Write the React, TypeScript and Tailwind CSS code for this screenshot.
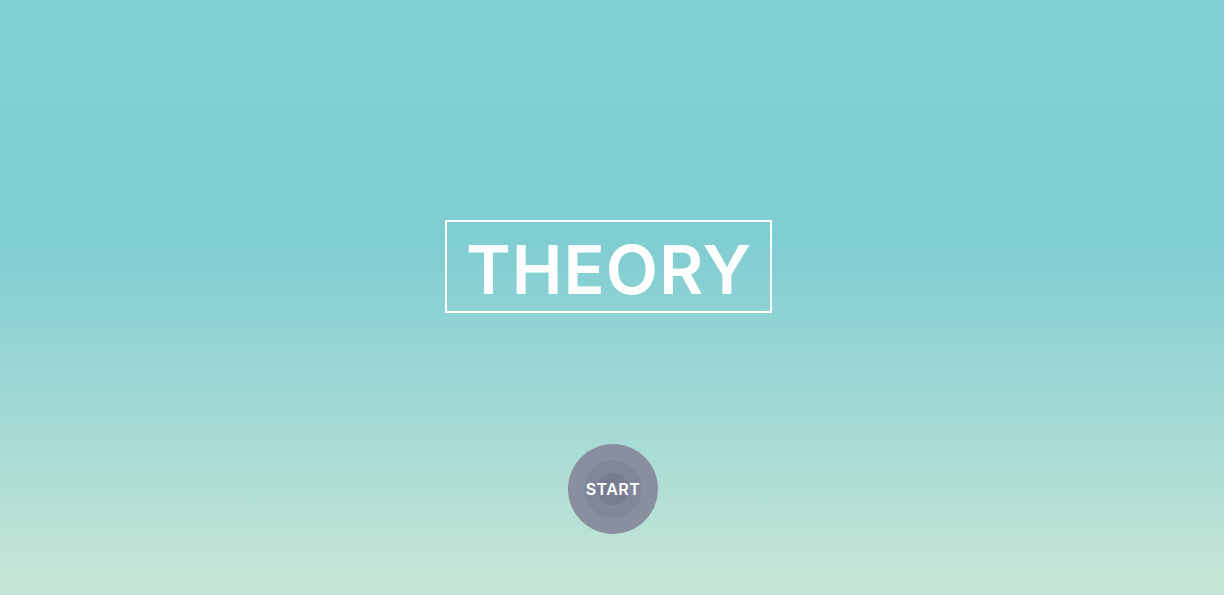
import React from "react";

export default function App() {
  return (
    <div
      className="w-[1224px] h-[595px] flex flex-col items-center bg-[linear-gradient(to_bottom,#82d0d4_0%,#7fcdd2_40%,#a3d9d5_70%,#c6e7d6_100%)]"
      style={{ fontFamily: "Inter, 'Open Sans', sans-serif" }}
    >
      <div className="mt-[220px] mr-[8px] w-[327px] h-[93px] border-2 border-white flex items-center justify-center">
        <span className="text-white text-[68px] font-semibold leading-none tracking-[1px] pt-[4px] pl-[2px]">
          THEORY
        </span>
      </div>
      <div className="mt-[131px] ml-[2px] w-[90px] h-[90px] rounded-full bg-[#8a8fa0] flex items-center justify-center relative">
        <div className="w-[58px] h-[58px] rounded-full bg-[#81869a] flex items-center justify-center">
          <div className="w-[32px] h-[32px] rounded-full bg-[#787c90]" />
        </div>
        <span className="absolute inset-0 flex items-center justify-center text-white text-[16px] font-semibold tracking-[0.5px]">
          START
        </span>
      </div>
    </div>
  );
}
